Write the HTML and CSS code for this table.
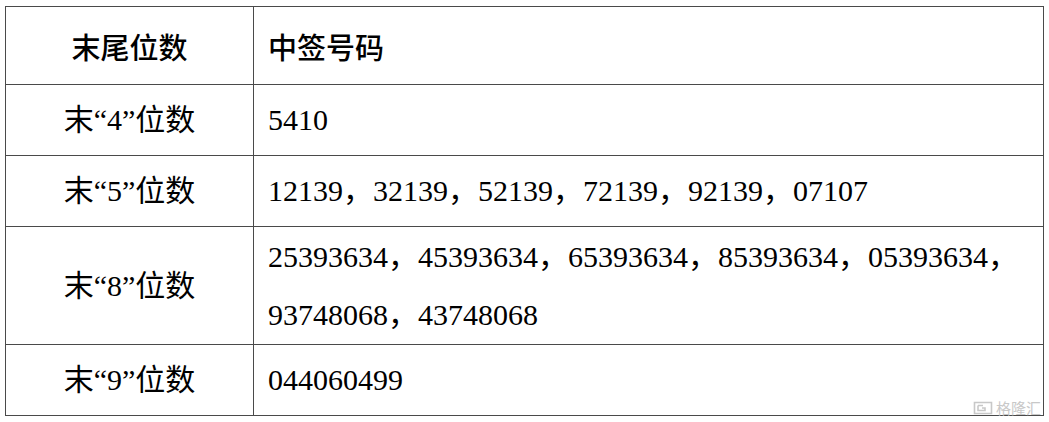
FILE: index.html
```html
<!DOCTYPE html>
<html lang="zh">
<head>
<meta charset="utf-8">
<link rel="stylesheet" href="styles.css">
</head>
<body>
<div class="page">
  <table class="lottery">
    <colgroup><col class="c1"><col class="c2"></colgroup>
    <tr class="head">
      <th class="center">末尾位数</th>
      <th class="left">中签号码</th>
    </tr>
    <tr class="r1">
      <td class="center">末“4”位数</td>
      <td class="left">5410</td>
    </tr>
    <tr class="r1">
      <td class="center">末“5”位数</td>
      <td class="left">12139，32139，52139，72139，92139，07107</td>
    </tr>
    <tr class="r2">
      <td class="center">末“8”位数</td>
      <td class="left">25393634，45393634，65393634，85393634，05393634，<br>93748068，43748068</td>
    </tr>
    <tr class="r1 last">
      <td class="center">末“9”位数</td>
      <td class="left">044060499</td>
    </tr>
  </table>
  <div class="watermark">
    <svg class="wm-icon" width="20" height="14" viewBox="0 0 20 14">
      <path d="M1.5 1.5 H18.5 V12.5 H1.5 Z" fill="none" stroke="#c8c8c8" stroke-width="1.6"/>
      <path d="M5 4.5 H10 M5 4.5 V9.5 H12 V7 H9" fill="none" stroke="#c8c8c8" stroke-width="1.6"/>
    </svg>
    <span class="wm-text">格隆汇</span>
  </div>
</div>
</body>
</html>
```
FILE: styles.css
```css
html, body {
  margin: 0;
  padding: 0;
  background: #ffffff;
}
.page {
  position: relative;
  width: 1049px;
  height: 422px;
  padding: 6px 0 0 5px;
  box-sizing: border-box;
}
.lottery {
  border-collapse: collapse;
  width: 1038px;
  table-layout: fixed;
  font-family: "Liberation Serif", "Noto Sans CJK SC", serif;
  font-size: 30px;
  color: #000;
}
.c1 { width: 248px; }
.c2 { width: 790px; }
.lottery th, .lottery td {
  border: 1.5px solid #4a4a4a;
  padding: 0;
  vertical-align: middle;
}
.lottery th {
  font-family: "Noto Sans CJK SC", sans-serif;
  font-weight: 500;
  font-size: 29px;
  height: 77px;
}
.center { text-align: center; }
.left { text-align: left; padding-left: 14px !important; }
.r1 td { height: 70px; line-height: 34px; }
.r2 td { height: 117px; line-height: 58px; }
.last td { height: 70px; }
.watermark {
  position: absolute;
  left: 973px;
  top: 400px;
  display: flex;
  align-items: center;
  gap: 3px;
  color: #c8c8c8;
  font-family: "Noto Sans CJK SC", sans-serif;
  font-size: 15px;
  line-height: 16px;
}
.wm-icon { display: block; }
```
